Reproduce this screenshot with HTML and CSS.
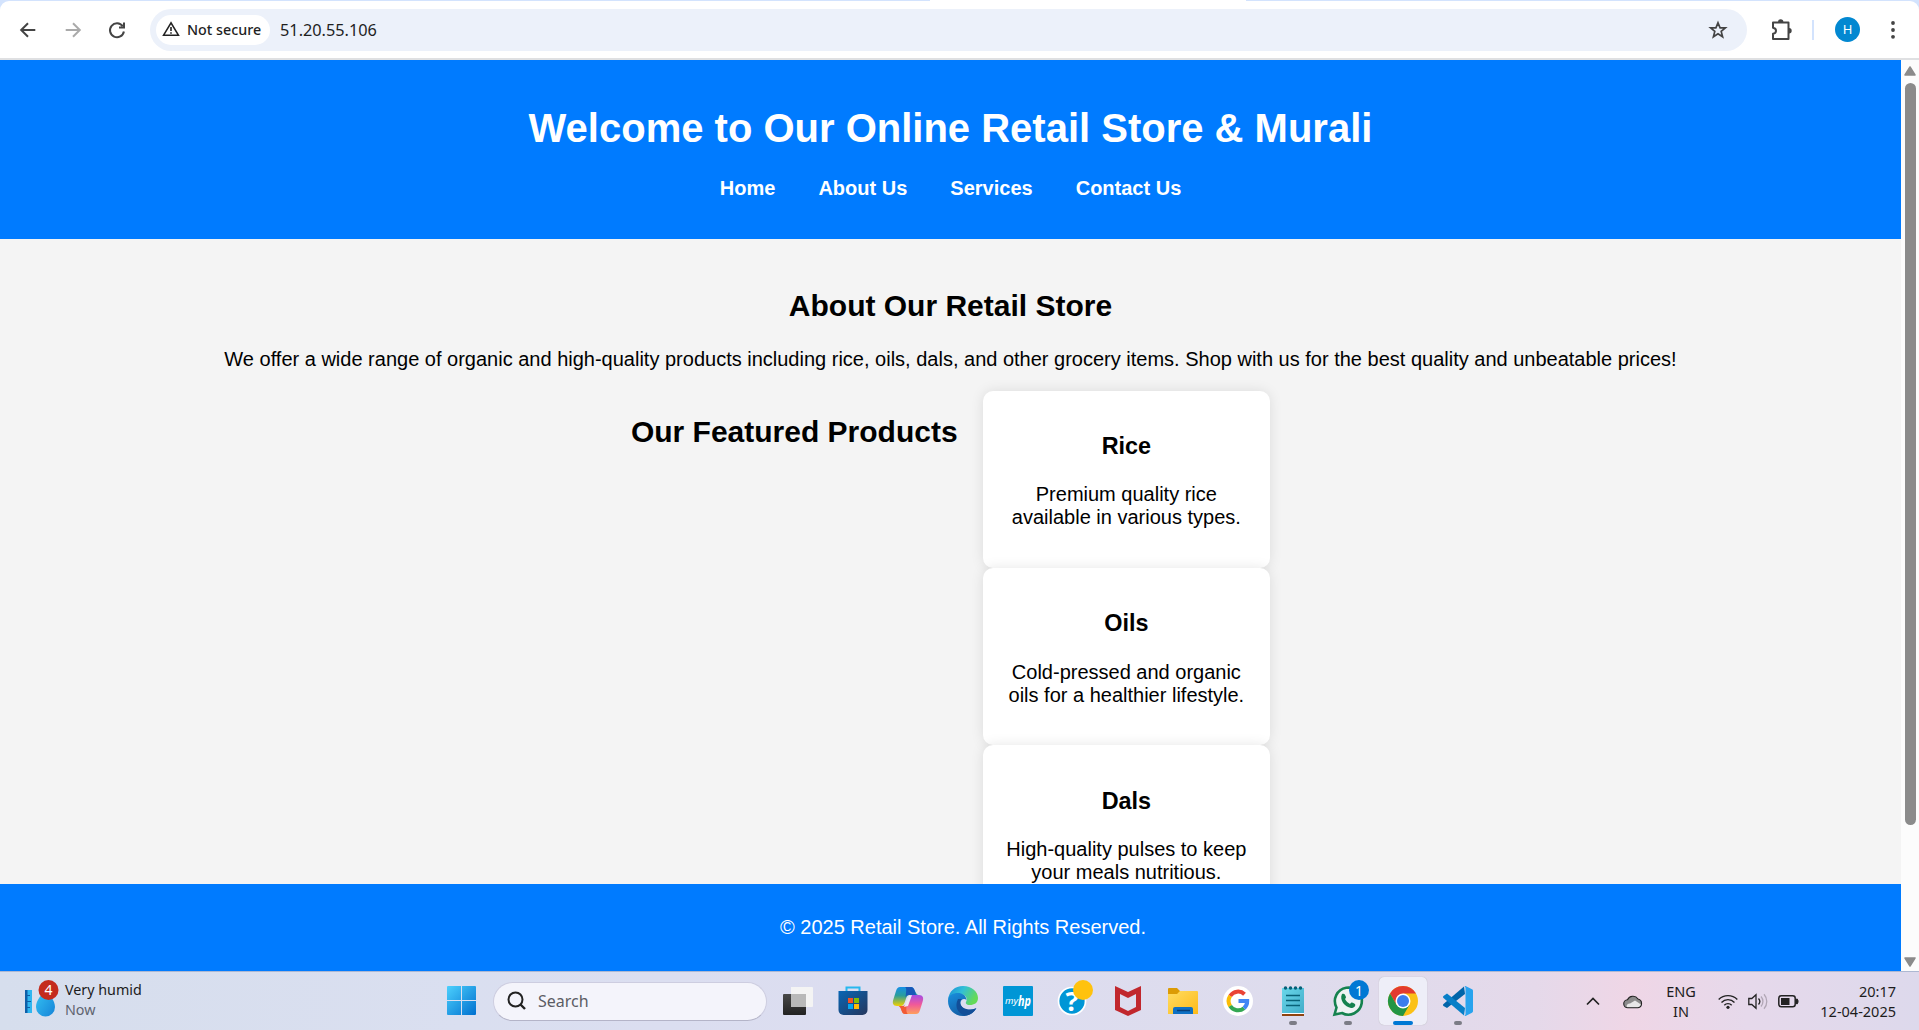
FILE: index.html
```html
<!DOCTYPE html>
<html lang="en">
<head>
<meta charset="utf-8">
<title>Retail Store</title>
<link rel="stylesheet" href="styles.css">
</head>
<body>
<div class="tabstrip"><span class="active-tab"></span></div>
<div class="toolbar">
  <svg class="nav-ico" viewBox="0 0 20 20"><path d="M17.3 10H3.5M10 3.2 3.2 10l6.8 6.8" /></svg>
  <svg class="nav-ico dim" viewBox="0 0 20 20"><path d="M2.7 10h13.8M10 3.2l6.8 6.8-6.8 6.8" /></svg>
  <svg class="nav-ico reload" viewBox="0 0 20 20"><path d="M15.7 6.2A7 7 0 1 0 16.9 11.5M17 2.5v4.9h-5" /></svg>
  <div class="omnibox">
    <div class="chip">
      <svg width="18" height="16" viewBox="0 0 18 16"><path d="M9 1.8 1.6 14.2h14.8z" fill="none" stroke="#222" stroke-width="1.6"/><path d="M9 6v4M9 11.2v1.6" stroke="#222" stroke-width="1.6"/></svg>
      <span>Not secure</span>
    </div>
    <span class="url">51.20.55.106</span>
    <svg class="star" width="20" height="20" viewBox="0 0 20 20"><path d="m10 2.8 2.1 5h5.3l-4.2 3.6 1.4 5.4L10 13.8l-4.6 3 1.4-5.4-4.2-3.6h5.3z" fill="none" stroke="#444" stroke-width="1.7"/></svg>
  </div>
  <svg class="puzzle" width="22" height="22" viewBox="0 0 22 22"><path d="M2 3.5h15.5V20H2v-5.2c4-.6 4-5.500 0-6z" fill="none" stroke="#444" stroke-width="2" stroke-linejoin="round"/><path d="M7 3a2.700 2.700 0 0 1 5.400 0zM18 9a2.700 2.700 0 0 1 0 5.400z" fill="#444"/></svg>
  <span class="divider"></span>
  <span class="avatar">H</span>
  <svg class="dots" width="6" height="20" viewBox="0 0 6 20"><g fill="#444"><circle cx="3" cy="3" r="1.9"/><circle cx="3" cy="10" r="1.9"/><circle cx="3" cy="16.800" r="1.9"/></g></svg>
</div>
<div class="viewport">
  <div class="page">
    <header>
      <h1>Welcome to Our Online Retail Store &amp; Murali</h1>
      <nav><ul>
        <li>Home</li>
        <li>About Us</li>
        <li>Services</li>
        <li>Contact Us</li>
      </ul></nav>
    </header>
    <main>
      <h2>About Our Retail Store</h2>
      <p>We offer a wide range of organic and high-quality products including rice, oils, dals, and other grocery items. Shop with us for the best quality and unbeatable prices!</p>
      <div class="featured">
        <h2>Our Featured Products</h2>
        <div class="products">
          <div class="card"><h3>Rice</h3><p>Premium quality rice available in various types.</p></div>
          <div class="card"><h3>Oils</h3><p>Cold-pressed and organic oils for a healthier lifestyle.</p></div>
          <div class="card"><h3>Dals</h3><p>High-quality pulses to keep your meals nutritious.</p></div>
        </div>
      </div>
    </main>
    <footer><p>© 2025 Retail Store. All Rights Reserved.</p></footer>
  </div>
  <div class="scrollbar">
    <svg width="12" height="10" viewBox="0 0 12 10"><path d="M6 1 11 9H1z" fill="#8b8b8b" stroke="#8b8b8b" stroke-width="1.500" stroke-linejoin="round"/></svg>
    <span class="thumb"></span>
    <svg width="12" height="10" viewBox="0 0 12 10"><path d="M6 9 11 1H1z" fill="#8b8b8b" stroke="#8b8b8b" stroke-width="1.500" stroke-linejoin="round"/></svg>
  </div>
</div>
<div class="taskbar">
  <div class="weather">
    <svg width="36" height="38" viewBox="0 0 36 38">
      <defs><linearGradient id="drop" x2="1" y2="1"><stop stop-color="#37c6f4"/><stop offset="1" stop-color="#1583d8"/></linearGradient></defs>
      <path d="M1 10h7v23H1z" fill="#2fb6f0"/><path d="M1 10h2.500v23H1zM3 15h3v1H3zM3 21h4v1H3zM3 27h3v1H3z" fill="#0d5fa8"/>
      <path d="M21.500 8C18 15 12 20 12 27a9.500 9.500 0 0 0 19 0c0-7-6-12-9.500-19z" fill="url(#drop)"/>
      <circle cx="24.500" cy="10" r="10" fill="#c42b1c"/><text x="24.500" y="15" text-anchor="middle" fill="#fff" class="badge">4</text>
    </svg>
    <div class="weather-text"><span>Very humid</span><span class="muted">Now</span></div>
  </div>
  <svg class="start" width="30" height="30" viewBox="0 0 30 30">
    <defs><linearGradient id="win" gradientUnits="userSpaceOnUse" x1="0" y1="0" x2="29" y2="29"><stop stop-color="#4cd0fd"/><stop offset="1" stop-color="#0070cf"/></linearGradient></defs>
    <path d="M1 0h13v14H0V1a1 1 0 0 1 1-1zM15 0h13a1 1 0 0 1 1 1v13H15zM0 15h14v14H1a1 1 0 0 1-1-1zM15 15h14v13a1 1 0 0 1-1 1H15z" fill="url(#win)"/>
  </svg>
  <div class="search">
    <svg width="20" height="20" viewBox="0 0 20 20"><circle cx="8.500" cy="8.500" r="7" fill="none" stroke="#222" stroke-width="2"/><path d="m13.500 13.500 4.500 4.500" stroke="#222" stroke-width="2.400"/></svg>
    <span>Search</span>
  </div>
  <div class="apps">
    <span class="app"><svg viewBox="0 0 30 30"><defs><linearGradient id="tv" y2="1" x2="0"><stop stop-color="#484848"/><stop offset="1" stop-color="#222"/></linearGradient></defs><rect y="8" width="23" height="21" rx="1" fill="url(#tv)"/><path d="M8 1h21a1 1 0 0 1 1 1v18a1 1 0 0 1-1 1H8z" fill="#f4f4f4"/><path d="M8 8h15v13H8z" fill="#b9b9b9"/></svg></span>
    <span class="app"><svg viewBox="0 0 30 30"><defs><linearGradient id="st" x2="1" y2="1"><stop stop-color="#0866b5"/><stop offset="1" stop-color="#25365d"/></linearGradient></defs><path d="M8.500 6V1.500h13V6" fill="none" stroke="#27b8ee" stroke-width="2"/><path d="M.5 5h29v19a5 5 0 0 1-5 5h-19a5 5 0 0 1-5-5z" fill="url(#st)"/><path d="M10 12h5v5h-5z" fill="#f35325"/><path d="M16 12h5v5h-5z" fill="#81bc06"/><path d="M10 18h5v5h-5z" fill="#05a6f0"/><path d="M16 18h5v5h-5z" fill="#ffba08"/></svg></span>
    <span class="app"><svg viewBox="0 0 30 30"><defs><linearGradient id="ca" x2="0" y2="1"><stop stop-color="#168fe8"/><stop offset=".45" stop-color="#2b9d9b"/><stop offset="1" stop-color="#f2d000"/></linearGradient><linearGradient id="cb" x2="0" y2="1"><stop stop-color="#a44de5"/><stop offset=".5" stop-color="#f0599a"/><stop offset="1" stop-color="#ffa05c"/></linearGradient></defs><path d="M7 1h11c4 0 4 7 7 8h-9c-4 0-3 11-8 11H4c-4 0-5-3-3.500-7l2.500-8C4 2 5 1 7 1z" fill="url(#ca)"/><path d="M23 28H12c-4 0-3-7-6.500-8H10c5 0 5-11 9-11h7c4 0 5 3 3.500 7L27 24c-1 3-2 4-4 4z" fill="url(#cb)"/><path d="M12 1h6c3 0 4 4 5 8h-7c-2 0-3 1-3.500 3C13 6 14 2 12 1z" fill="#1858b8"/><path d="M6 20h4c2 0 3-1 4-4-1 6-1 11 1 12h-3c-4 0-3-6-6-8z" fill="#f15a35"/><path d="m16 10 3-1-4 11-4 1z" fill="#eee5f4"/></svg></span>
    <span class="app"><svg viewBox="0 0 30 30"><defs><linearGradient id="ea" x2="1" y2=".4"><stop stop-color="#168bd9"/><stop offset=".5" stop-color="#32bfd6"/><stop offset="1" stop-color="#65da57"/></linearGradient><linearGradient id="eb" x2=".6" y2="1"><stop stop-color="#1990df"/><stop offset="1" stop-color="#12589f"/></linearGradient></defs><path d="M0 14C1 5 7 0 15 0c9 0 15 6 15 12 0 5-4 7-8 7-4 0-5-2-3.500-4 1-4-2-7-7-7S2 10 0 14z" fill="url(#ea)"/><path d="M0 15C0 9 5 7 10 7c4 0 8 2 8.500 7-2-2-6-1-6 3 0 6 8 9 16 5C25 28 20 30 15 30 6 30 0 23 0 15z" fill="url(#eb)"/><path d="M10 13c-4 8 0 15 8 16.500 4-.5 8-3 10-7-8 3-15-.5-16-5.500 0-2 .5-3 2-4-2 0-3 0-4 0z" fill="#124e98"/></svg></span>
    <span class="app"><svg viewBox="0 0 30 30"><rect width="30" height="30" rx="1" fill="#0096d6"/><text x="2" y="18" class="my" textLength="13" lengthAdjust="spacingAndGlyphs">my</text><text x="15" y="20" class="hp" textLength="13" lengthAdjust="spacingAndGlyphs">hp</text></svg></span>
    <span class="app"><svg viewBox="0 0 30 30"><circle cx="14" cy="15" r="13.500" fill="#0096d6" stroke="#fff" stroke-width="1.700"/><text x="14" y="25" text-anchor="middle" class="help">?</text><circle cx="25" cy="4" r="10" fill="#ffc20e"/></svg></span>
    <span class="app"><svg viewBox="0 0 30 30"><path d="m2 0 13 6L28 0v24l-13 6L2 24zM7 8v13l8 4 8-4V8l-8 4z" fill="#c1272d" fill-rule="evenodd"/></svg></span>
    <span class="app"><svg viewBox="0 0 30 30"><defs><linearGradient id="fo" x2="1" y2="1"><stop stop-color="#ffdc62"/><stop offset="1" stop-color="#fdba18"/></linearGradient></defs><path d="M0 3a1 1 0 0 1 1-1h8l3 3h17v10H0z" fill="#dc9b05"/><path d="M0 8h9l3-3h17a1 1 0 0 1 1 1v22H0z" fill="url(#fo)"/><path d="M5 28v-5a2 2 0 0 1 2-2h16a2 2 0 0 1 2 2v5z" fill="#0e70c4"/><path d="M9 24.500h13" stroke="#083f78" stroke-width="1.500"/></svg></span>
    <span class="app"><svg viewBox="0 0 30 30"><circle cx="15" cy="15" r="15" fill="#fff"/><g fill="none" stroke-width="4"><path d="M7.200 10A9.300 9.300 0 0 1 21.500 8.200" stroke="#ea4335"/><path d="M7.200 20.100a9.300 9.300 0 0 1 0-10.200" stroke="#fbbc05"/><path d="M7.200 20A9.300 9.300 0 0 0 21 22.200" stroke="#34a853"/><path d="M21 22.200A9.300 9.300 0 0 0 24.200 15H15.500" stroke="#4285f4"/></g></svg></span>
    <span class="app run"><svg viewBox="0 0 30 30"><defs><linearGradient id="no" x2="1" y2="1"><stop stop-color="#69d7ea"/><stop offset="1" stop-color="#42adc9"/></linearGradient></defs><path d="M4 2h22v25H4z" fill="url(#no)"/><path d="M4 27h22v1H4z" fill="#fff"/><path d="M4 28h22v2H4z" fill="#904410"/><path d="M8 9.500h14M8 14.500h14M8 19.500h14" stroke="#086177" stroke-width="1.700"/><path d="M7.500 2v.1M12.500 2v.1M17.500 2v.1M22.500 2v.1" stroke="#086177" stroke-width="3.500" stroke-linecap="round"/></svg></span>
    <span class="app run"><svg viewBox="0 0 30 30"><path d="m1.500 28.500 2-7A13.500 13.500 0 1 1 9 27z" fill="#eef3f3" stroke="#15824e" stroke-width="2.600"/><path d="M9 8c2-1 3 0 4 3 0 1-1 2-1 2 1 2 3 4 5 5 2-3 3-1 5 0 1 2-1 4-4 4C12 21 6 14 9 8z" fill="#15824e"/><circle cx="26" cy="4" r="10" fill="#0078d4"/><text x="26" y="9.500" text-anchor="middle" fill="#fff" class="badge">1</text></svg></span>
    <span class="app run active"><svg viewBox="0 0 30 30"><circle cx="15" cy="15" r="15" fill="#fbc116"/><path d="M2 7.500A15 15 0 0 1 28 7.500H15L8.500 18.800z" fill="#e33b2e"/><path d="M2 7.500a15 15 0 0 0 13 22.500l6.500-11.250L15 22l-6.500-3.250z" fill="#239544"/><circle cx="15" cy="15" r="7.500" fill="#fff"/><circle cx="15" cy="15" r="6" fill="#3b7ded"/></svg></span>
    <span class="app run"><svg viewBox="0 0 30 30"><path d="M22 8 4 22 .500 20c-.7-.6-.7-1.300 0-2L21 .5z" fill="#0065a9"/><path d="M22 22 4 7.500.5 10c-.7.600-.7 1.300 0 2L21 29.500z" fill="#087fc8"/><path d="m21 .5 1.500-.5L29 3.300c.6.300 1 .8 1 1.400v20.600c0 .6-.4 1.100-1 1.400L22.500 30 21 29.500c1 .3 1.500-.5 1.500-1.500V2c0-1-.5-1.800-1.500-1.500z" fill="#28a3ee"/></svg></span>
  </div>
  <div class="tray">
    <svg class="caret" width="14" height="9" viewBox="0 0 14 9"><path d="m1 7.500 6-6 6 6" fill="none" stroke="#222" stroke-width="1.700"/></svg>
    <svg class="cloud" width="20" height="15" viewBox="0 0 20 15"><path d="M5 13.800a4 4 0 0 1-.5-8A6 6 0 0 1 15 5a4.500 4.500 0 0 1 0 8.800z" fill="#8c8c8c"/><path d="M4 13.500c-1-3 1-4 3-4l5-3 6 4c0 2-1 3-3 3z" fill="#e7e7e7"/><path d="M5 13.800a4 4 0 0 1-.5-8A6 6 0 0 1 15 5a4.500 4.500 0 0 1 0 8.800z" fill="none" stroke="#222" stroke-width="1.100"/></svg>
    <div class="lang"><span>ENG</span><span>IN</span></div>
    <svg class="wifi" width="20" height="15" viewBox="0 0 20 15"><g fill="none" stroke="#222" stroke-width="1.400"><path d="M.700 5.500a13 13 0 0 1 18.600 0M3.500 8.400a9 9 0 0 1 13 0M6.300 11.200a5.200 5.200 0 0 1 7.400 0"/></g><circle cx="10" cy="13.300" r="1.600" fill="#222"/></svg>
    <svg class="vol" width="21" height="17" viewBox="0 0 21 17"><g fill="none" stroke-width="1.300"><path d="M.8 5.500h3L8 1.800v13.400l-4.200-3.700h-3zM10.500 5.500a4.500 4.500 0 0 1 0 6" stroke="#222"/><path d="M13 3.500a7.500 7.500 0 0 1 0 10M16 1.200a11 11 0 0 1 0 14.600" stroke="#b1a6b5"/></g></svg>
    <svg class="bat" width="21" height="13" viewBox="0 0 21 13"><rect x=".8" y=".8" width="16.400" height="11" rx="2.500" fill="none" stroke="#222" stroke-width="1.500"/><rect x="3" y="3" width="8.500" height="7" fill="#222"/><path d="M18 4.200h1.500v1H20v2.500h-.5v1H18z" fill="#222" stroke="#222"/></svg>
    <div class="clock"><span>20:17</span><span>12-04-2025</span></div>
  </div>
</div>
</body>
</html>
```
FILE: styles.css
```css
* { box-sizing: border-box; }
body { margin: 0; width: 1919px; height: 1030px; overflow: hidden; display: flex; flex-direction: column; background: #d3e3fd; font-family: "Liberation Sans", Arial, sans-serif; }
svg { display: block; flex: none; overflow: visible; }

/* Browser toolbar */
.tabstrip { height: 1px; flex: none; padding-left: 930px; }
.active-tab { display: block; width: 316px; height: 1px; background: #fff; }
.toolbar { height: 59px; flex: none; background: #fff; border-bottom: 2px solid #dfe0e2; border-radius: 9px 9px 0 0; display: flex; align-items: center; padding: 0 23px 0 18px; font-family: "Noto Sans", sans-serif; }
.nav-ico { width: 20px; height: 20px; margin-right: 25px; fill: none; stroke: #444; stroke-width: 2; }
.nav-ico.dim { stroke: #aaa; margin-right: 24px; }
.nav-ico.reload { margin-right: 26px; }
.omnibox { width: 1597px; height: 42px; margin-left: -3px; border-radius: 21px; background: #ecf1fa; display: flex; align-items: center; padding: 0 19px 0 6px; }
.chip { width: 114px; height: 30px; border-radius: 15px; background: #fff; display: flex; align-items: center; gap: 7px; padding: 0 0 1px 6px; font-size: 14.3px; font-weight: 500; color: #1f1f1f; white-space: nowrap; }
.url { margin-left: 10px; font-size: 16.300px; color: #1f1f1f; }
.star { margin-left: auto; }
.puzzle { margin-left: 24px; }
.divider { width: 2px; height: 20px; margin-left: 19px; background: #d3e3fd; }
.avatar { width: 25px; height: 25px; margin-left: 21px; border-radius: 50%; background: #0288d1; color: #fff; font-size: 13px; line-height: 25px; text-align: center; }
.dots { margin-left: auto; }

/* Web page */
.viewport { height: 911px; flex: none; display: flex; }
.page { position: relative; width: 1901px; height: 911px; overflow: hidden; background: #f4f4f4; color: #000; font-size: 20px; text-align: center; }
header { background: #007bff; color: #fff; padding: 18.75px; display: flow-root; }
h1 { font-size: 40px; margin: 26.8px 0; }
ul { list-style: none; margin: 20px 0; padding: 0; }
li { display: inline; margin: 0 18.75px; font-weight: bold; }
main { padding: 25px; }
h2 { font-size: 30px; margin: 24.900px 0; }
p { margin: 20px 0; }
.featured { display: flex; justify-content: center; align-items: flex-start; gap: 25px; }
.featured h2 { margin-top: 24px; }
.card { width: 287.500px; padding: 18.750px; border-radius: 10px; background: #fff; box-shadow: 0 0 12.500px rgba(0, 0, 0, .1); display: flow-root; }
h3 { font-size: 23.400px; margin: 23.400px 0; }
footer { position: absolute; left: 0; bottom: 0; width: 1926px; height: 87px; padding: 12px; background: #007bff; color: #fff; }
.scrollbar { width: 18px; background: #fcfcfc; display: flex; flex-direction: column; align-items: center; padding: 6px 0 4px; }
.thumb { width: 11px; height: 742px; margin-top: 7px; margin-bottom: auto; border-radius: 6px; background: #8b8b8b; }

/* Taskbar */
.taskbar { height: 59px; flex: none; border-top: 1px solid #adb8d2; background: linear-gradient(90deg, #d6deed 0, #dadff0 24%, #dcddf0 45%, #dedced 68%, #e5d9ea 80%, #efd6e6 85%, #e6d9eb 91%, #ddd9ec 100%); display: flex; align-items: center; font-family: "Noto Sans", sans-serif; color: #1c1c1c; font-size: 15px; }
.weather { width: 446px; display: flex; padding: 0 0 3px 24px; gap: 5px; }
.weather-text { display: flex; flex-direction: column; line-height: 20px; font-size: 14.300px; }
.muted { color: #5f6470; }
.badge { font-size: 14px; }
.start { margin-left: 1px; }
.search { width: 274px; height: 39px; margin-left: 16px; border: 1px solid #cdcde0; border-bottom-color: #b4b4c8; border-radius: 20px; background: #f4f4fb; display: flex; align-items: center; gap: 11px; padding-left: 13px; color: #5c5c64; font-size: 16px; }
.apps { display: flex; margin-left: 7px; gap: 7px; }
.app { position: relative; width: 48px; height: 48px; display: grid; place-items: center; border-radius: 5px; }
.app svg { width: 30px; height: 30px; }
.run::after { content: ""; position: absolute; left: 20px; bottom: 0; width: 8px; height: 4px; border-radius: 2px; background: #7c7c86; }
.active { background: #eeeef8; box-shadow: 0 0 1px #aaa; }
.active::after { left: 14px; width: 20px; background: #0078d4; }
.my { font-size: 9.500px; font-style: italic; fill: #fff; }
.hp { font-size: 15px; font-style: italic; font-weight: bold; fill: #fff; }
.help { font-size: 27px; font-weight: bold; fill: #fff; }
.tray { margin-left: auto; padding-right: 23px; display: flex; align-items: center; }
.lang, .clock { display: flex; flex-direction: column; line-height: 20px; font-size: 14.500px; padding-bottom: 1px; }
.cloud { margin-left: 23px; }
.lang { width: 30px; margin-left: 23px; align-items: center; }
.wifi { margin-left: 22px; }
.vol { margin-left: 10px; }
.bat { margin-left: 9px; }
.clock { width: 77px; margin-left: 20px; align-items: flex-end; white-space: nowrap; }
```
